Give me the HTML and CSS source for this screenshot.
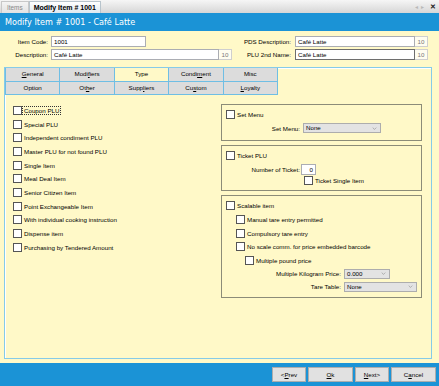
FILE: index.html
```html
<!DOCTYPE html>
<html lang="en">
<head>
    <meta charset="UTF-8">
    <title>Modify Item</title>
    <link rel="stylesheet" href="styles.css">
</head>
<body>
    <div class="tabbar">
        <div class="doctab">Items</div>
        <div class="doctab active">Modify Item # 1001</div>
        <div class="tabctl">
            <span class="arrow">&#9666;</span><span class="arrow">&#9656;</span><span class="close">&#10005;</span>
        </div>
    </div>
    <div class="titlebar">Modify Item # 1001 - Café Latte</div>
    <div class="main">
        <div class="fields">
            <div class="fcol">
                <div class="frow">
                    <label class="flabel">Item Code:</label>
                    <div class="input code">1001</div>
                </div>
                <div class="frow">
                    <label class="flabel">Description:</label>
                    <div class="input desc">Café Latte</div>
                    <div class="count">10</div>
                </div>
            </div>
            <div class="fcol right">
                <div class="frow">
                    <label class="flabel wide">PDS Description:</label>
                    <div class="input pds">Café Latte</div>
                    <div class="count">10</div>
                </div>
                <div class="frow">
                    <label class="flabel wide">PLU 2nd Name:</label>
                    <div class="input pds focus">Café Latte</div>
                    <div class="count">10</div>
                </div>
            </div>
        </div>

        <div class="panel">
            <div class="tabs">
                <div class="tab"><u>G</u>eneral</div>
                <div class="tab">Modi<u>f</u>iers</div>
                <div class="tab current">Type</div>
                <div class="tab">Condi<u>m</u>ent</div>
                <div class="tab">Misc</div>
                <div class="tab">Option</div>
                <div class="tab">Ot<u>h</u>er</div>
                <div class="tab">Supp<u>l</u>iers</div>
                <div class="tab">Cu<u>s</u>tom</div>
                <div class="tab"><u>L</u>oyalty</div>
            </div>
            <div class="panelbody">
                <div class="typelist">
                    <div class="cb-row"><span class="box"></span><span class="focusline">Coupon PLU</span></div>
                    <div class="cb-row"><span class="box"></span>Special PLU</div>
                    <div class="cb-row"><span class="box"></span>Independent condiment PLU</div>
                    <div class="cb-row"><span class="box"></span>Master PLU for not found PLU</div>
                    <div class="cb-row"><span class="box"></span>Single Item</div>
                    <div class="cb-row"><span class="box"></span>Meal Deal Item</div>
                    <div class="cb-row"><span class="box"></span>Senior Citizen Item</div>
                    <div class="cb-row"><span class="box"></span>Point Exchangeable Item</div>
                    <div class="cb-row"><span class="box"></span>With individual cooking instruction</div>
                    <div class="cb-row"><span class="box"></span>Dispense item</div>
                    <div class="cb-row"><span class="box"></span>Purchasing by Tendered Amount</div>
                </div>
                <div class="groups">
                    <div class="group g-set">
                        <div class="cb-row"><span class="box"></span>Set Menu</div>
                        <div class="lrow">
                            <label class="glabel l-set">Set Menu:</label>
                            <div class="select s-set">None<svg class="chev" viewBox="0 0 8 5"><path d="M1 1l3 3 3-3" fill="none" stroke="#777" stroke-width="0.8"/></svg></div>
                        </div>
                    </div>
                    <div class="group g-ticket">
                        <div class="cb-row"><span class="box"></span>Ticket PLU</div>
                        <div class="lrow">
                            <label class="glabel l-ticket">Number of Ticket:</label>
                            <div class="input num">0</div>
                        </div>
                        <div class="cb-row ind-ticket"><span class="box"></span>Ticket Single Item</div>
                    </div>
                    <div class="group g-scale">
                        <div class="cb-row"><span class="box"></span>Scalable item</div>
                        <div class="cb-row ind1"><span class="box"></span>Manual tare entry permitted</div>
                        <div class="cb-row ind1"><span class="box"></span>Compulsory tare entry</div>
                        <div class="cb-row ind1"><span class="box"></span>No scale comm. for price embedded barcode</div>
                        <div class="cb-row ind2"><span class="box"></span>Multiple pound price</div>
                        <div class="lrow">
                            <label class="glabel l-scale">Multiple Kilogram Price:</label>
                            <div class="select s-kg">0.000<svg class="chev" viewBox="0 0 8 5"><path d="M1 1l3 3 3-3" fill="none" stroke="#777" stroke-width="0.8"/></svg></div>
                        </div>
                        <div class="lrow">
                            <label class="glabel l-scale">Tare Table:</label>
                            <div class="select s-tare">None<svg class="chev" viewBox="0 0 8 5"><path d="M1 1l3 3 3-3" fill="none" stroke="#777" stroke-width="0.8"/></svg></div>
                        </div>
                    </div>
                </div>
            </div>
        </div>
    </div>
    <div class="footer">
        <div class="btn small">&lt;<u>P</u>rev</div>
        <div class="btn"><u>O</u>k</div>
        <div class="btn small"><u>N</u>ext&gt;</div>
        <div class="btn">C<u>a</u>ncel</div>
    </div>
</body>
</html>
```

FILE: styles.css
```css
* {
    box-sizing: border-box;
}

body, html {
    margin: 0;
    padding: 0;
}
body {
    width: 439px;
    height: 386px;
    overflow: hidden;
    font-family: "Liberation Sans", Arial, sans-serif;
    font-size: 6.2px;
    color: #000;
    display: flex;
    flex-direction: column;
}

/* top document tabs */
.tabbar {
    height: 13px;
    background: linear-gradient(#f6f6f6, #d6d6d6);
    display: flex;
    align-items: flex-end;
    padding-left: 1px;
}
.doctab {
    height: 12px;
    line-height: 12px;
    padding: 0 5px;
    color: #888;
    font-size: 6.4px;
    border: 1px solid #c8c8c8;
    border-bottom: none;
    background: linear-gradient(#f4f4f4, #e2e2e2);
}
.doctab.active {
    color: #000;
    font-weight: bold;
    font-size: 7px;
    padding: 0 4px;
    background: linear-gradient(#ffffff, #dfe9f0);
    border-color: #b8c4cc;
}
.tabctl {
    margin-left: auto;
    height: 13px;
    display: flex;
    align-items: center;
    padding-right: 3px;
    gap: 3px;
}
.arrow {
    color: #b8b8b8;
    font-size: 6px;
}
.close {
    color: #222;
    font-size: 7px;
    font-weight: bold;
    margin-left: 3px;
}

.titlebar {
    height: 18px;
    line-height: 18px;
    background: #1b93d6;
    color: #fff;
    font-family: "DejaVu Sans", Verdana, sans-serif;
    font-size: 8.1px;
    padding-left: 5px;
}

.main {
    height: 332px;
    background: #fff9c8;
    padding-top: 5px;
}

/* header fields */
.fields {
    display: flex;
}
.fcol {
    width: 240px;
    display: flex;
    flex-direction: column;
    gap: 2px;
}
.fcol.right {
    width: auto;
}
.frow {
    display: flex;
    align-items: center;
    height: 11px;
}
.flabel {
    width: 48px;
    text-align: right;
    margin-right: 3px;
}
.flabel.wide {
    width: 52px;
    padding-right: 1px;
}
.input {
    height: 11px;
    line-height: 9px;
    background: #fff;
    border: 1px solid #abadb3;
    padding-left: 2px;
}
.input.code {
    width: 95px;
}
.input.desc {
    width: 168px;
}
.input.pds {
    width: 120px;
}
.input.focus {
    border-color: #6e6e6e;
}
.count {
    width: 13px;
    height: 11px;
    line-height: 9px;
    border: 1px solid #cfcfcf;
    border-left: none;
    background: #fffdf0;
    color: #777;
    text-align: center;
}

/* tab panel */
.panel {
    margin: 7px 0 0 4px;
    width: 428px;
    height: 292px;
    border: 1px solid #86cbe8;
    box-shadow: inset 1px 1px 0 #fff;
}
.tabs {
    width: 273px;
    display: grid;
    grid-template-columns: repeat(5, 1fr);
    border-left: 1px solid #6fbee4;
}
.tab {
    height: 13.5px;
    line-height: 12.5px;
    text-align: center;
    background: #dcdcdc;
    border-right: 1px solid #6fbee4;
    border-bottom: 1px solid #6fbee4;
}
.tab.current {
    background: #fff9c8;
}
.tab u, .btn u {
    text-decoration-thickness: 0.5px;
    text-underline-offset: 1px;
}

.panelbody {
    display: flex;
    justify-content: space-between;
    padding: 9px 9px 0 8px;
}

.cb-row {
    display: flex;
    align-items: center;
    height: 13.7px;
    white-space: nowrap;
}
.box {
    width: 9px;
    height: 9px;
    border: 1px solid #555;
    background: #fff;
    margin-right: 2px;
    flex: none;
}
.focusline {
    outline: 1px dotted #333;
    outline-offset: 0;
    padding: 0 1px;
    margin-left: -1px;
}
.typelist {
    margin-top: -0.5px;
}

/* right group boxes */
.groups {
    width: 201px;
    display: flex;
    flex-direction: column;
    gap: 4px;
}
.group {
    border: 1px solid #8c8c78;
    padding: 3px 4px 0 4px;
}
.g-set {
    height: 37px;
}
.g-ticket {
    height: 46px;
}
.g-scale {
    height: 103px;
}
.lrow {
    display: flex;
    align-items: center;
    height: 13px;
}
.glabel {
    text-align: right;
    padding-right: 3px;
}
.l-set {
    width: 77px;
}
.l-ticket {
    width: 75px;
    padding-right: 1px;
}
.l-scale {
    width: 118px;
}
.ind-ticket {
    padding-left: 78px;
    margin-top: -2px;
}
.ind1 {
    padding-left: 10px;
}
.ind2 {
    padding-left: 19px;
}
.select {
    height: 10px;
    line-height: 8px;
    background: #e3e3e3;
    border: 1px solid #adadad;
    padding-left: 2px;
    display: flex;
    align-items: center;
}
.chev {
    width: 5px;
    height: 3px;
    margin-left: auto;
    margin-right: 3px;
}
.s-set {
    width: 78px;
}
.s-kg {
    width: 46px;
}
.s-tare {
    width: 73px;
}
.input.num {
    width: 15px;
    height: 11px;
    text-align: right;
    padding-right: 2px;
}

/* bottom buttons */
.footer {
    height: 23px;
    background: #1b93d6;
    display: flex;
    align-items: center;
    justify-content: flex-end;
    gap: 2px;
    padding-right: 3px;
}
.btn {
    width: 45px;
    height: 15px;
    line-height: 13px;
    text-align: center;
    background: #e1e1e1;
    border: 1px solid #adadad;
}
.btn.small {
    width: 34px;
}
```
